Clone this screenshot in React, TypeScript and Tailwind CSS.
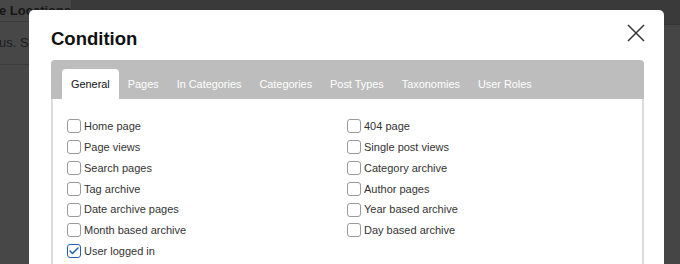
import { Check } from "lucide-react";

const tabs = ["General", "Pages", "In Categories", "Categories", "Post Types", "Taxonomies", "User Roles"];

const leftCol = [
  { label: "Home page" },
  { label: "Page views" },
  { label: "Search pages" },
  { label: "Tag archive" },
  { label: "Date archive pages" },
  { label: "Month based archive" },
  { label: "User logged in", checked: true },
];

const rightCol = [
  { label: "404 page" },
  { label: "Single post views" },
  { label: "Category archive" },
  { label: "Author pages" },
  { label: "Year based archive" },
  { label: "Day based archive" },
];

function Box({ label, checked }: { label: string; checked?: boolean }) {
  return (
    <label className="flex items-center gap-[3px] h-[20.8px] text-[11px] text-[#333]">
      <span
        className={
          checked
            ? "w-[14px] h-[14px] rounded-[3px] border-[1.5px] border-[#1f62b8] bg-white flex items-center justify-center"
            : "w-[14px] h-[14px] rounded-[3px] border-[1.5px] border-[#9a9a9a] bg-white"
        }
      >
        {checked && <Check className="w-[12px] h-[12px] text-[#1f62b8]" strokeWidth={3} />}
      </span>
      <span>{label}</span>
    </label>
  );
}

export default function App() {
  return (
    <div
      className="relative w-[680px] h-[264px] overflow-hidden bg-[#3d3d3d]"
      style={{ fontFamily: '"Liberation Sans", Arial, sans-serif' }}
    >
      {/* dimmed page behind */}
      <div className="flex h-full">
        <div className="w-[72px] h-full bg-[#474747] border-r border-[#3a3a3a] flex flex-col">
          <div className="h-[22px] border-b border-[#3b3b3b] flex items-center whitespace-nowrap">
            <span className="-ml-[1px] text-[13px] font-bold text-[#161616]">e Locations</span>
          </div>
          <div className="h-[43px] border-b border-[#3b3b3b] flex items-center whitespace-nowrap">
            <span className="-ml-[1px] text-[13px] text-[#1c1c1c]">us. Se</span>
          </div>
        </div>
        <div className="flex-1 flex flex-col">
          <div className="h-[25px] bg-[#3a3a3a] border-b border-[#333]" />
          <div className="flex-1 bg-[#454545]" />
        </div>
      </div>

      {/* modal */}
      <div className="absolute left-[29px] top-[10px] w-[635px] h-[290px] bg-white rounded-[5px] pl-[22px] pr-[20px]">
        <div className="flex items-start justify-between h-[50px]">
          <h2 className="mt-[15px] text-[18.5px] font-bold text-[#111]">Condition</h2>
          <button className="mt-[14px] mr-[-1px] text-[#333]">
            <svg width="18" height="18" viewBox="0 0 18 18" fill="none" stroke="currentColor" strokeWidth="1.5">
              <path d="M1 1L17 17M17 1L1 17" />
            </svg>
          </button>
        </div>

        <div className="rounded-t-[4px] overflow-hidden">
          <div className="h-[39px] bg-[#bdbdbd] pl-[11px] pt-[9px] flex">
            {tabs.map((t, i) => (
              <div
                key={t}
                className={
                  i === 0
                    ? "h-[30px] px-[9px] flex items-center bg-white rounded-t-[4px] text-[10.9px] text-[#111]"
                    : "h-[30px] px-[9px] flex items-center text-[10.9px] text-white"
                }
              >
                {t}
              </div>
            ))}
          </div>
          <div className="h-[200px] border-x-2 border-[#dcdcdc] pl-[14px] pt-[17px] flex">
            <div className="w-[280px] flex flex-col">
              {leftCol.map((c) => (
                <Box key={c.label} label={c.label} checked={c.checked} />
              ))}
            </div>
            <div className="flex flex-col">
              {rightCol.map((c) => (
                <Box key={c.label} label={c.label} />
              ))}
            </div>
          </div>
        </div>
      </div>
    </div>
  );
}
